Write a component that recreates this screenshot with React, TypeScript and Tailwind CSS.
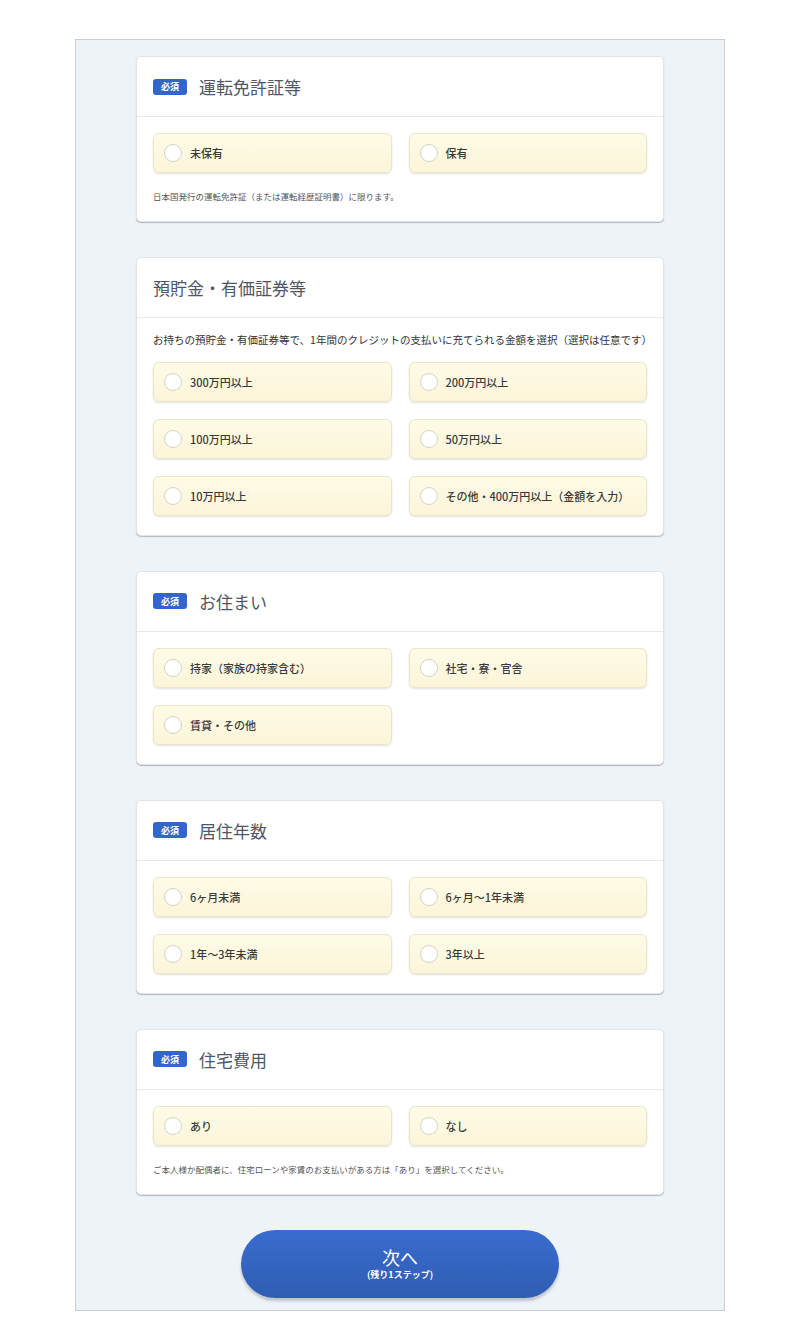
import React from "react";

type Section = {
  title: string;
  required: boolean;
  description?: string;
  options: string[];
  note?: string;
};

const SECTIONS: Section[] = [
  {
    title: "運転免許証等",
    required: true,
    options: ["未保有", "保有"],
    note: "日本国発行の運転免許証（または運転経歴証明書）に限ります。",
  },
  {
    title: "預貯金・有価証券等",
    required: false,
    description:
      "お持ちの預貯金・有価証券等で、1年間のクレジットの支払いに充てられる金額を選択（選択は任意です）",
    options: ["300万円以上", "200万円以上", "100万円以上", "50万円以上", "10万円以上", "その他・400万円以上（金額を入力）"],
  },
  {
    title: "お住まい",
    required: true,
    options: ["持家（家族の持家含む）", "社宅・寮・官舎", "賃貸・その他"],
  },
  {
    title: "居住年数",
    required: true,
    options: ["6ヶ月未満", "6ヶ月〜1年未満", "1年〜3年未満", "3年以上"],
  },
  {
    title: "住宅費用",
    required: true,
    options: ["あり", "なし"],
    note: "ご本人様か配偶者に、住宅ローンや家賃のお支払いがある方は「あり」を選択してください。",
  },
];

function RadioOption({ label }: { label: string }) {
  return (
    <label className="flex items-center h-[40px] px-[10px] rounded-[6px] border border-[#ece6c9] bg-gradient-to-b from-[#fefbe6] to-[#fbf5d9] shadow-[0_1px_2px_rgba(0,0,0,0.12)] cursor-pointer">
      <span className="w-[18px] h-[18px] rounded-full bg-white border border-[#d6d3c6] shrink-0" />
      <span className="ml-[8px] text-[11px] font-medium text-[#3a3a3a]">{label}</span>
    </label>
  );
}

function Card({ section }: { section: Section }) {
  return (
    <div className="bg-white rounded-[5px] border border-[#e1e5ea] shadow-[0_1px_1px_rgba(0,0,0,0.25)]">
      <div className="flex items-center h-[60px] px-[16px] border-b border-[#e6e9ee]">
        {section.required && (
          <span className="mr-[12px] w-[34px] h-[16px] rounded-[3px] bg-[#3366cc] text-white text-[9px] font-bold flex items-center justify-center">
            必須
          </span>
        )}
        <h2 className="text-[17px] text-[#4f5666]">{section.title}</h2>
      </div>
      <div className="px-[16px] pt-[16px] pb-[19px]">
        {section.description && (
          <p className="text-[10.5px] text-[#333] mb-[14px] -mt-[2px] whitespace-nowrap">{section.description}</p>
        )}
        <div className="grid grid-cols-2 gap-x-[17px] gap-y-[17px]">
          {section.options.map((o) => (
            <RadioOption key={o} label={o} />
          ))}
        </div>
        {section.note && <p className="mt-[17px] text-[8.5px] leading-[12px] text-[#555]">{section.note}</p>}
      </div>
    </div>
  );
}

export default function App() {
  return (
    <div
      className="bg-white pt-[39px] pb-[12px]"
      style={{ fontFamily: '"Noto Sans CJK JP", "Noto Sans", sans-serif' }}
    >
      <div className="mx-auto w-[650px] border border-[#c9ced4] bg-[#eef3f8] px-[60px] pt-[16px] pb-[12px]">
        <div className="flex flex-col gap-[35px]">
          {SECTIONS.map((s) => (
            <Card key={s.title} section={s} />
          ))}
        </div>
        <div className="flex justify-center mt-[35px]">
          <button className="w-[318px] h-[68px] rounded-full bg-gradient-to-b from-[#3a6ccf] to-[#2f5db3] shadow-[0_3px_3px_rgba(0,0,0,0.2)] text-white flex flex-col items-center justify-center">
            <span className="text-[18px] leading-[22px]">次へ</span>
            <span className="text-[9px] font-bold leading-[14px]">(残り1ステップ)</span>
          </button>
        </div>
      </div>
    </div>
  );
}
